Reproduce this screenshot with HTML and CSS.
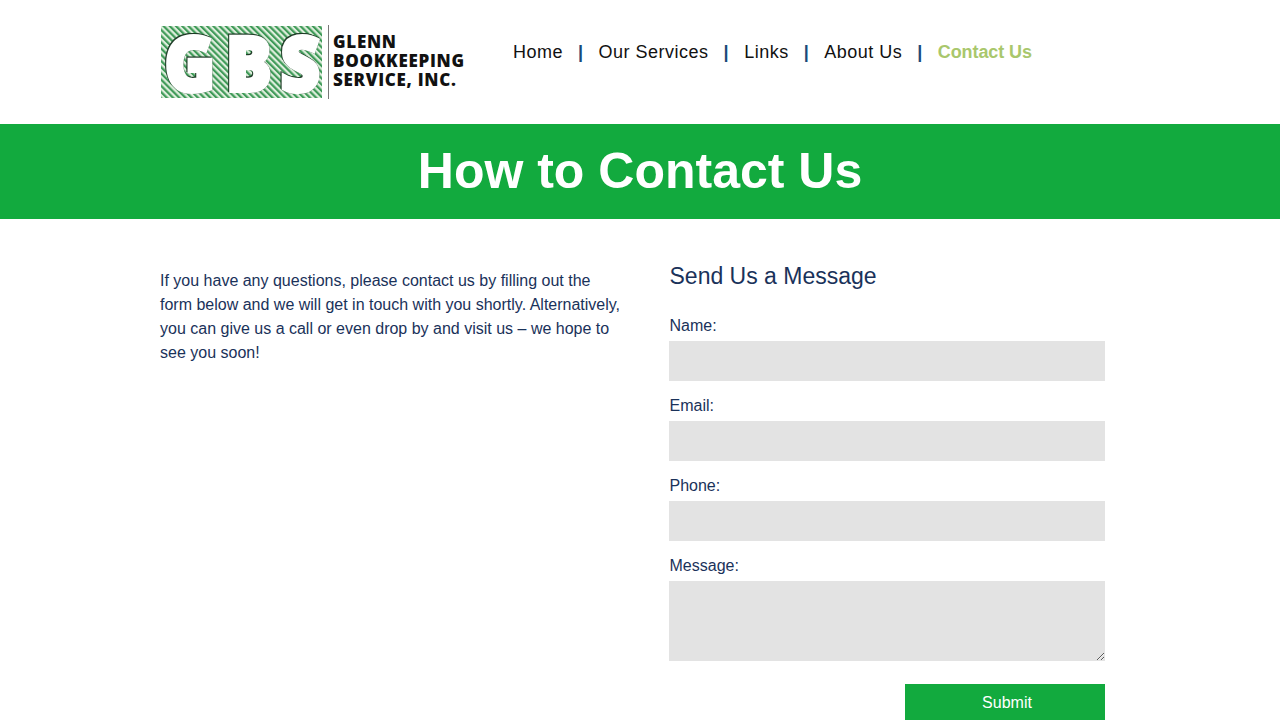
FILE: index.html
```html
<!DOCTYPE html>
<html lang="en">

<head>
  <meta charset="UTF-8">
  <title>Contact Us</title>
  <link rel="stylesheet" href="styles.css">
</head>

<body>
  <header class="header">
    <div class="logo">
      <svg class="logo-mark" width="164" height="76" viewBox="0 0 164 76">
        <defs>
          <pattern id="stripes" width="4.4" height="4.4" patternUnits="userSpaceOnUse" patternTransform="rotate(-45)">
            <rect width="4.4" height="4.4" fill="#dfeedd"/>
            <rect width="2.2" height="4.4" fill="#3f9a58"/>
          </pattern>
        </defs>
        <rect x="1" y="2" width="161" height="72" fill="url(#stripes)"/>
        <text class="logo-gbs" x="5 73 134" y="67" transform="scale(0.9 1)">GBS</text>
      </svg>
      <div class="logo-rule"></div>
      <div class="logo-name">GLENN<br>BOOKKEEPING<br>SERVICE, INC.</div>
    </div>
    <nav class="nav">
      <a href="#">Home</a>
      <span class="sep">|</span>
      <a href="#">Our Services</a>
      <span class="sep">|</span>
      <a href="#">Links</a>
      <span class="sep">|</span>
      <a href="#">About Us</a>
      <span class="sep">|</span>
      <a href="#" class="active">Contact Us</a>
    </nav>
  </header>

  <div class="banner">
    <h1>How to Contact Us</h1>
  </div>

  <main class="content">
    <div class="intro">
      <p>If you have any questions, please contact us by filling out the form below and we will get in touch with you shortly. Alternatively, you can give us a call or even drop by and visit us – we hope to see you soon!</p>
    </div>
    <form class="form">
      <h2>Send Us a Message</h2>
      <label for="name">Name:</label>
      <input id="name" class="inp" type="text">
      <label for="email">Email:</label>
      <input id="email" class="inp" type="text">
      <label for="phone">Phone:</label>
      <input id="phone" class="inp" type="text">
      <label for="message">Message:</label>
      <textarea id="message" class="inp msg"></textarea>
      <button type="button">Submit</button>
    </form>
  </main>
</body>

</html>
```

FILE: styles.css
```css
html,
body {
  margin: 0;
  height: 720px;
  overflow: hidden;
}

body {
  font-family: "Liberation Sans", Arial, sans-serif;
  font-size: 16px;
  color: #1a325a;
  background: #fff;
}

.header {
  height: 124px;
  padding-left: 160px;
  display: flex;
  align-items: flex-start;
}

.logo {
  width: 306px;
  height: 76px;
  margin-top: 24px;
  display: flex;
}

.logo-mark {
  flex: none;
  overflow: visible;
}

.logo-gbs {
  font-family: "Open Sans", sans-serif;
  font-weight: 800;
  font-size: 76px;
  fill: #fff;
  stroke: #fff;
  stroke-width: 4;
  filter: drop-shadow(0.6px 0.6px 0 #1d3a25) drop-shadow(-0.4px -0.4px 0 #1d3a25);
}

.logo-rule {
  width: 1px;
  height: 74px;
  margin: 1px 0 0 4px;
  background: #777;
}

.logo-name {
  margin: 8px 0 0 4px;
  font-family: "Open Sans", sans-serif;
  font-weight: 800;
  font-size: 17px;
  line-height: 19px;
  letter-spacing: 0.7px;
  color: #111;
  white-space: nowrap;
}

.nav {
  margin: 41px 0 0 47px;
  display: flex;
  font-size: 18px;
  line-height: 22px;
  letter-spacing: 0.5px;
}

.nav a {
  color: #111;
  text-decoration: none;
}

.nav .active {
  color: #a9c76c;
  font-weight: 700;
  letter-spacing: -0.1px;
}

.sep {
  margin: 0 15px;
  font-weight: 700;
  color: #1a4a7a;
}

.banner {
  height: 93px;
  padding-bottom: 2px;
  background: #12aa3e;
  display: flex;
  align-items: center;
  justify-content: center;
}

.banner h1 {
  margin: 0;
  font-size: 50px;
  font-weight: 700;
  color: #fff;
}

.content {
  padding: 44px 0 0 160px;
  display: flex;
}

.intro {
  width: 464px;
  margin-right: 45px;
}

.intro p {
  margin: 6px 0 0;
  line-height: 24px;
}

.form {
  width: 436px;
  display: flex;
  flex-direction: column;
}

.form h2 {
  margin: 0 0 24px;
  padding-left: 0.5px;
  font-size: 23px;
  line-height: 27px;
  font-weight: 400;
}

.form label {
  height: 24px;
  padding-left: 0.5px;
  line-height: 24px;
  margin-bottom: 3px;
}

.inp {
  display: block;
  box-sizing: border-box;
  width: 436px;
  height: 40px;
  margin: 0 0 13px;
  padding: 0;
  border: 0;
  background: #e3e3e3;
}

.msg {
  height: 80px;
  margin-bottom: 23px;
}

.form button {
  align-self: flex-end;
  flex: none;
  width: 200px;
  height: 40px;
  padding: 0 0 3px 4px;
  border: 0;
  background: #12aa3e;
  color: #fff;
  font-family: inherit;
  font-size: 16px;
}
```
